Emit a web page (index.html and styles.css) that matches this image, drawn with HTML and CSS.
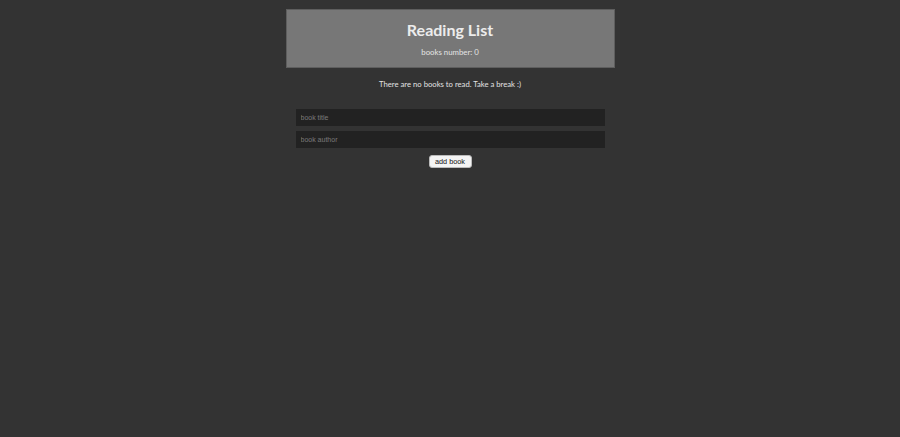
FILE: index.html
```html
<!DOCTYPE html>
<html lang="en">
<head>
<meta charset="utf-8">
<title>Reading List</title>
<link rel="stylesheet" href="styles.css">
</head>
<body>
<div class="app">
  <header class="header">
    <h1 class="title">Reading List</h1>
    <p class="count">books number: 0</p>
  </header>
  <p class="empty">There are no books to read. Take a break :)</p>
  <form class="form">
    <input class="field" type="text" placeholder="book title">
    <input class="field" type="text" placeholder="book author">
    <button class="add" type="button">add book</button>
  </form>
</div>
</body>
</html>
```
FILE: styles.css
```css
html, body {
  margin: 0;
  padding: 0;
  background: #333333;
  font-family: "Lato", "Noto Sans", sans-serif;
  color: #e2e2e2;
}
.app {
  width: 329px;
  margin: 9px auto 0;
  display: flex;
  flex-direction: column;
  align-items: stretch;
}
.header {
  box-sizing: border-box;
  height: 59px;
  background: #777777;
  border: 1px solid #5e5e5e;
  padding-top: 10px;
  text-align: center;
}
.title {
  margin: 0;
  font-size: 16px;
  line-height: 20px;
  font-weight: 700;
  color: #ececec;
}
.count {
  margin: 7px 0 0;
  font-size: 7.8px;
  line-height: 10px;
  color: #e4e4e4;
}
.empty {
  margin: 10px 0 0;
  font-size: 7.7px;
  line-height: 12px;
  text-align: center;
}
.form {
  margin: 19px 10px 0;
  display: flex;
  flex-direction: column;
  gap: 5px;
  align-items: center;
}
.field {
  box-sizing: border-box;
  width: 100%;
  height: 17px;
  margin: 0;
  border: none;
  outline: none;
  background: #222222;
  color: #cccccc;
  font-family: "Liberation Sans", sans-serif;
  font-size: 7px;
  padding: 0 5px;
}
.field::placeholder {
  color: #7a7a7a;
}
.add {
  margin-top: 2px;
  box-sizing: border-box;
  width: 43px;
  height: 13px;
  padding: 0;
  border: 1px solid #bbbbbb;
  border-radius: 3px;
  background: #f4f4f4;
  color: #111111;
  font-family: "Liberation Sans", sans-serif;
  font-size: 7.3px;
  line-height: 11px;
}
```
